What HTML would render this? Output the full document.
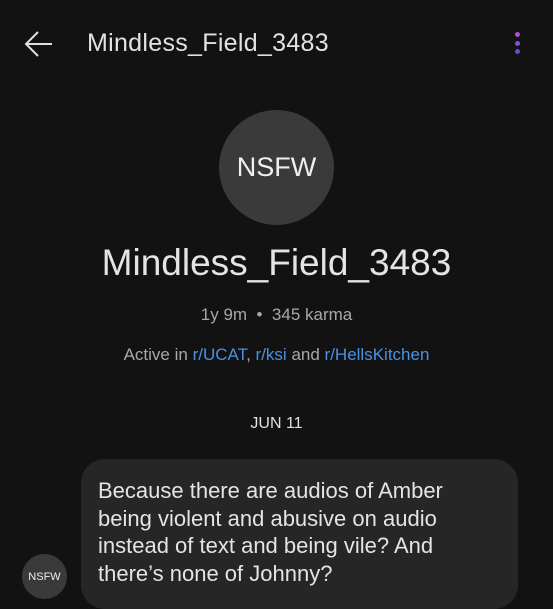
<!DOCTYPE html>
<html><head><style>
body{margin:0;width:553px;height:600px;background:#121212;overflow:hidden;font-family:"Liberation Sans",sans-serif;color:#e4e4e4;position:relative}
.a{position:absolute}
</style></head><body>
<svg class="a" style="left:24px;top:30px" width="32" height="28" viewBox="0 0 32 28"><path d="M28 14H3M14 2L2 14l12 12" stroke="#e0e0e0" stroke-width="2" fill="none"/></svg>
<div class="a" style="left:87px;top:29px;font-size:25px;color:#e2e2e2;letter-spacing:0.3px">Mindless_Field_3483</div>
<div class="a" style="left:515px;top:32px;width:5px;height:5px;border-radius:50%;background:#b04ed0"></div>
<div class="a" style="left:515px;top:41px;width:5px;height:5px;border-radius:50%;background:#8a4ed8"></div>
<div class="a" style="left:515px;top:49px;width:5px;height:5px;border-radius:50%;background:#5a4fe0"></div>
<div class="a" style="left:219px;top:110px;width:115px;height:115px;border-radius:50%;background:#3a3a3a;display:flex;align-items:center;justify-content:center;font-size:27px;color:#f0f0f0">NSFW</div>
<div class="a" style="left:0;width:553px;text-align:center;top:242px;font-size:37px;color:#e4e4e4">Mindless_Field_3483</div>
<div class="a" style="left:0;width:553px;text-align:center;top:305px;font-size:17px;color:#a8a8a8">1y 9m &nbsp;•&nbsp; 345 karma</div>
<div class="a" style="left:0;width:553px;text-align:center;top:345px;font-size:17px;color:#a8a8a8">Active in <span style="color:#4a90e2">r/UCAT</span>, <span style="color:#4a90e2">r/ksi</span> and <span style="color:#4a90e2">r/HellsKitchen</span></div>
<div class="a" style="left:0;width:553px;text-align:center;top:415px;font-size:16px;color:#e0e0e0">JUN 11</div>
<div class="a" style="left:81px;top:459px;width:437px;height:150px;border-radius:24px;background:#262626"></div>
<div class="a" style="left:98px;top:477px;width:420px;font-size:22px;line-height:27.5px;color:#e4e4e4">Because there are audios of Amber<br>being violent and abusive on audio<br>instead of text and being vile? And<br>there’s none of Johnny?</div>
<div class="a" style="left:22px;top:554px;width:45px;height:45px;border-radius:50%;background:#3a3a3a;display:flex;align-items:center;justify-content:center;font-size:11px;color:#eee">NSFW</div>
</body></html>
